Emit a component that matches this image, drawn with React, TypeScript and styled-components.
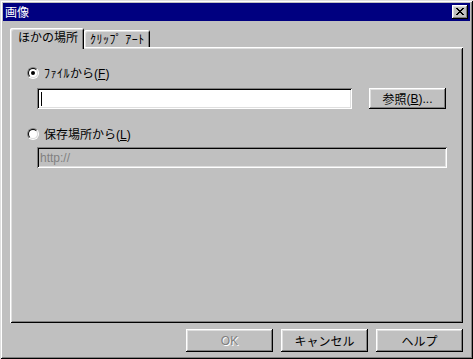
import React from "react";
import styled, { createGlobalStyle } from "styled-components";

const Global = createGlobalStyle`
  html, body { margin: 0; padding: 0; background: #c0c0c0; }
  body { font-family: "Noto Sans CJK JP", "Noto Sans", sans-serif; font-size: 12px; }
  * { box-sizing: border-box; }
`;

const Window = styled.div`
  width: 473px;
  height: 359px;
  background: #c0c0c0;
  padding: 3px;
  display: flex;
  flex-direction: column;
  box-shadow: inset 1px 1px #dfdfdf, inset -1px -1px #000, inset 2px 2px #fff,
    inset -2px -2px #808080;
`;

const TitleBar = styled.div`
  height: 18px;
  background: #000080;
  color: #fff;
  display: flex;
  align-items: center;
  justify-content: space-between;
  padding: 0 2px 0 2px;
`;

const Title = styled.span`
  font-weight: normal;
  font-size: 12px;
  line-height: 18px;
`;

const CloseButton = styled.div`
  width: 16px;
  height: 14px;
  background: #c0c0c0;
  display: flex;
  align-items: center;
  justify-content: center;
  box-shadow: inset -1px -1px #000, inset 1px 1px #fff, inset -2px -2px #808080,
    inset 2px 2px #dfdfdf;
  padding-bottom: 1px;
`;

const Content = styled.div`
  flex: 1;
  display: flex;
  flex-direction: column;
  padding: 7px 7px 0 7px;
`;

const TabStrip = styled.div`
  display: flex;
  align-items: flex-end;
  height: 19px;
`;

const Tab = styled.div<{ $active?: boolean }>`
  position: relative;
  z-index: ${(p) => (p.$active ? 1 : 0)};
  height: ${(p) => (p.$active ? 21 : 17)}px;
  margin-bottom: ${(p) => (p.$active ? -2 : 0)}px;
  padding: ${(p) => (p.$active ? "1px 6px 0 8px" : "0 5px 0 6px")};
  background: #c0c0c0;
  color: #000;
  display: flex;
  align-items: ${(p) => (p.$active ? "flex-start" : "center")};
  line-height: 16px;
  white-space: nowrap;
  border-top-left-radius: 2px;
  border-top-right-radius: 2px;
  box-shadow: inset 1px 1px #fff, inset -1px 0 #000, inset 2px 2px #dfdfdf,
    inset -2px 0 #808080;
`;

const Panel = styled.div`
  height: 276px;
  background: #c0c0c0;
  box-shadow: inset 1px 1px #fff, inset -1px -1px #000, inset 2px 2px #dfdfdf,
    inset -2px -2px #808080;
  display: flex;
  flex-direction: column;
  padding: 19px 0 0 17px;
`;

const RadioRow = styled.label<{ $gapTop: number }>`
  display: flex;
  align-items: center;
  height: 14px;
  margin-top: ${(p) => p.$gapTop}px;
  gap: 5px;
  line-height: 14px;
  color: #000;
`;

const RadioOuter = styled.span`
  width: 12px;
  height: 12px;
  border-radius: 50%;
  border: 1px solid;
  border-color: #808080 #fff #fff #808080;
  display: flex;
`;

const RadioInner = styled.span`
  flex: 1;
  border-radius: 50%;
  border: 1px solid;
  border-color: #000 #dfdfdf #dfdfdf #000;
  background: #fff;
  display: flex;
  align-items: center;
  justify-content: center;
`;

const RadioDot = styled.span`
  width: 4px;
  height: 4px;
  border-radius: 50%;
  background: #000;
`;

const HalfWidth = styled.span`
  letter-spacing: 0.5px;
`;

const FieldRow = styled.div<{ $gapTop: number }>`
  display: flex;
  align-items: flex-start;
  margin-top: ${(p) => p.$gapTop}px;
  margin-left: 10px;
  gap: 17px;
`;

const TextField = styled.div<{ $width: number; $disabled?: boolean }>`
  width: ${(p) => p.$width}px;
  height: 21px;
  background: ${(p) => (p.$disabled ? "#c0c0c0" : "#fff")};
  color: ${(p) => (p.$disabled ? "#808080" : "#000")};
  box-shadow: inset 1px 1px #808080, inset -1px -1px #fff, inset 2px 2px #000,
    inset -2px -2px #dfdfdf;
  display: flex;
  align-items: center;
  padding-left: 3px;
  font-family: "Liberation Sans", Arial, sans-serif;
  font-size: 12px;
`;

const Caret = styled.span`
  width: 1px;
  height: 14px;
  margin-left: 1px;
  background: #000;
`;

const Button = styled.div<{ $width: number; $height: number; $disabled?: boolean }>`
  width: ${(p) => p.$width}px;
  height: ${(p) => p.$height}px;
  background: #c0c0c0;
  color: ${(p) => (p.$disabled ? "#808080" : "#000")};
  text-shadow: ${(p) => (p.$disabled ? "1px 1px #fff" : "none")};
  display: flex;
  align-items: center;
  justify-content: center;
  white-space: nowrap;
  box-shadow: inset -1px -1px #000, inset 1px 1px #fff, inset -2px -2px #808080,
    inset 2px 2px #dfdfdf;
`;

const Latin = styled.span`
  font-family: "Liberation Sans", Arial, sans-serif;
`;

const ButtonRow = styled.div`
  display: flex;
  justify-content: flex-end;
  gap: 8px;
  margin-top: 6px;
`;

const CloseGlyph = () => (
  <svg width="8" height="7" viewBox="0 0 8 7" shapeRendering="crispEdges">
    {[
      [0, 0, 2], [6, 0, 2],
      [1, 1, 2], [5, 1, 2],
      [2, 2, 4],
      [3, 3, 2],
      [2, 4, 4],
      [1, 5, 2], [5, 5, 2],
      [0, 6, 2], [6, 6, 2],
    ].map(([x, y, w], i) => (
      <rect key={i} x={x} y={y} width={w} height={1} fill="#000" />
    ))}
  </svg>
);

const Radio = ({ checked }: { checked?: boolean }) => (
  <RadioOuter>
    <RadioInner>{checked && <RadioDot />}</RadioInner>
  </RadioOuter>
);

export default function App() {
  return (
    <>
      <Global />
      <Window>
        <TitleBar>
          <Title>画像</Title>
          <CloseButton>
            <CloseGlyph />
          </CloseButton>
        </TitleBar>
        <Content>
          <TabStrip>
            <Tab $active>ほかの場所</Tab>
            <Tab>
              <HalfWidth>ｸﾘｯﾌﾟ ｱｰﾄ</HalfWidth>
            </Tab>
          </TabStrip>
          <Panel>
            <RadioRow $gapTop={0}>
              <Radio checked />
              <span>
                <HalfWidth>ﾌｧｲﾙ</HalfWidth>から<Latin>(<u>F</u>)</Latin>
              </span>
            </RadioRow>
            <FieldRow $gapTop={8}>
              <TextField $width={315}>
                <Caret />
              </TextField>
              <Button $width={77} $height={21}>
                参照<Latin>(<u>B</u>)...</Latin>
              </Button>
            </FieldRow>
            <RadioRow $gapTop={18}>
              <Radio />
              <span>
                保存場所から<Latin>(<u>L</u>)</Latin>
              </span>
            </RadioRow>
            <FieldRow $gapTop={6}>
              <TextField $width={410} $disabled>
                http://
              </TextField>
            </FieldRow>
          </Panel>
          <ButtonRow>
            <Button $width={87} $height={23} $disabled>
              <Latin>OK</Latin>
            </Button>
            <Button $width={87} $height={23}>
              キャンセル
            </Button>
            <Button $width={87} $height={23}>
              ヘルプ
            </Button>
          </ButtonRow>
        </Content>
      </Window>
    </>
  );
}
